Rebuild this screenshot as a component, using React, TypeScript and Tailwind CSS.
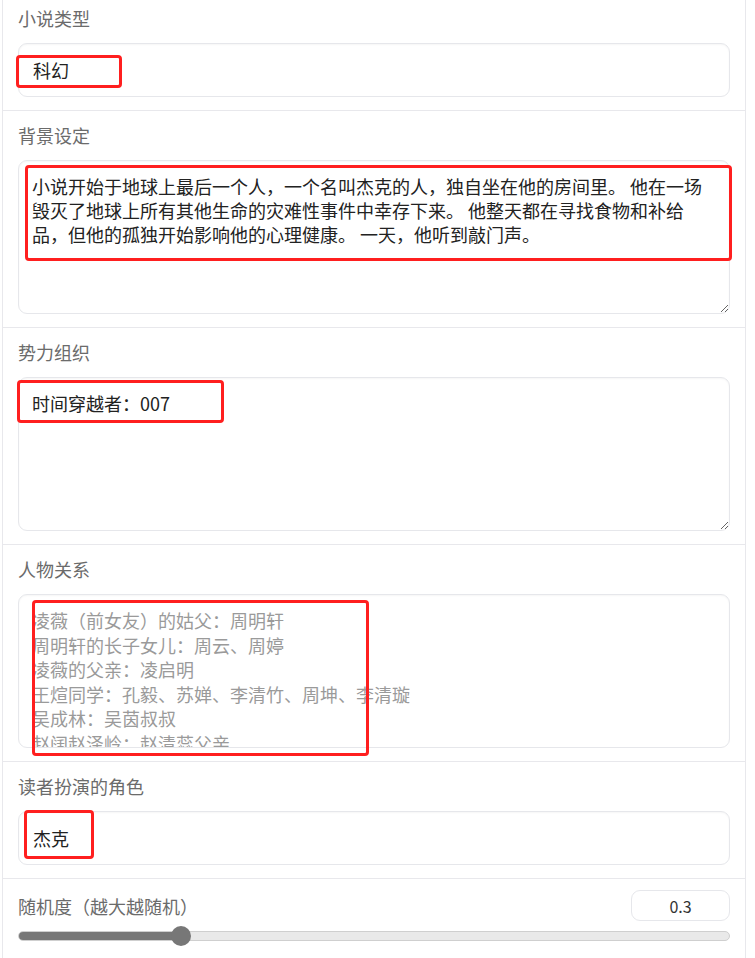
import React from "react";

const font = { fontFamily: '"Noto Sans CJK SC", "Noto Sans", sans-serif' };

function Label({ children }: { children: React.ReactNode }) {
  return <div className="text-[18px] leading-[22px] text-[#6b6b6b] mb-[14px]">{children}</div>;
}

const fieldBase =
  "w-full rounded-[9px] border border-[#e6e7eb] bg-white shadow-[inset_0_1px_2px_rgba(0,0,0,0.04)] text-[18px] outline-none";

export default function App() {
  const relations = [
    "凌薇（前女友）的姑父：周明轩",
    "周明轩的长子女儿：周云、周婷",
    "凌薇的父亲：凌启明",
    "王煊同学：孔毅、苏婵、李清竹、周坤、李清璇",
    "吴成林：吴茵叔叔",
    "赵阔赵泽岭：赵清蕊父亲",
  ];
  return (
    <div className="relative w-[755px] h-[958px] overflow-hidden bg-white" style={font}>
      <div className="ml-[2px] w-[744px] border-x border-[#e8e8ec] bg-[#e8e8ec] flex flex-col gap-px">
        {/* 小说类型 */}
        <div className="bg-white px-[15px] pt-[7px] pb-[13px]">
          <Label>小说类型</Label>
          <div className={fieldBase + " text-[#222] h-[54px] flex items-center px-[14px]"}>科幻</div>
        </div>
        {/* 背景设定 */}
        <div className="bg-white px-[15px] pt-[13px] pb-[13px]">
          <Label>背景设定</Label>
          <textarea
            readOnly
            className={fieldBase + " text-[#222] block h-[154px] px-[13px] py-[13px] leading-[24px] resize-y"}
            defaultValue="小说开始于地球上最后一个人，一个名叫杰克的人，独自坐在他的房间里。 他在一场毁灭了地球上所有其他生命的灾难性事件中幸存下来。 他整天都在寻找食物和补给品，但他的孤独开始影响他的心理健康。 一天，他听到敲门声。"
          />
        </div>
        {/* 势力组织 */}
        <div className="bg-white px-[15px] pt-[13px] pb-[13px]">
          <Label>势力组织</Label>
          <textarea
            readOnly
            className={fieldBase + " text-[#222] block h-[154px] px-[13px] py-[13px] leading-[24px] resize-y"}
            defaultValue="时间穿越者：007"
          />
        </div>
        {/* 人物关系 */}
        <div className="bg-white px-[15px] pt-[13px] pb-[13px]">
          <Label>人物关系</Label>
          <div className={fieldBase + " text-[#9a9a9a] h-[154px] overflow-hidden px-[13px] pt-[13px] leading-[24.6px]"}>
            {relations.map((r) => (
              <div key={r} className="whitespace-nowrap">{r}</div>
            ))}
          </div>
        </div>
        {/* 读者扮演的角色 */}
        <div className="bg-white px-[15px] pt-[13px] pb-[13px]">
          <Label>读者扮演的角色</Label>
          <div className={fieldBase + " text-[#222] h-[54px] flex items-center px-[14px]"}>杰克</div>
        </div>
        {/* 随机度 */}
        <div className="bg-white px-[15px] pt-[11px] pb-[20px]">
          <div className="flex items-center justify-between">
            <div className="text-[18px] leading-[22px] text-[#6b6b6b]">随机度（越大越随机）</div>
            <div className="w-[99px] h-[31px] rounded-[9px] border border-[#e6e7eb] flex items-center justify-center text-[16px] text-[#333]">
              0.3
            </div>
          </div>
          <div className="relative mt-[5px] h-[20px] flex items-center">
            <div className="w-full h-[10px] rounded-full bg-[#e9e9e9] border border-[#cfcfcf] overflow-hidden">
              <div className="h-full bg-[#777777]" style={{ width: "23%" }} />
            </div>
            <div className="absolute left-[153px] top-0 w-[20px] h-[20px] rounded-full bg-[#777777]" />
          </div>
        </div>
      </div>

      {/* red annotation boxes */}
      <div className="absolute left-[16px] top-[55px] w-[106px] h-[33px] border-[3px] border-[#ff1f1f] rounded-[4px]" />
      <div className="absolute left-[25px] top-[165px] w-[707px] h-[96px] border-[3px] border-[#ff1f1f] rounded-[4px]" />
      <div className="absolute left-[17px] top-[380px] w-[207px] h-[43px] border-[3px] border-[#ff1f1f] rounded-[4px]" />
      <div className="absolute left-[32px] top-[600px] w-[337px] h-[156px] border-[3px] border-[#ff1f1f] rounded-[4px]" />
      <div className="absolute left-[24px] top-[810px] w-[70px] h-[49px] border-[3px] border-[#ff1f1f] rounded-[4px]" />
    </div>
  );
}
